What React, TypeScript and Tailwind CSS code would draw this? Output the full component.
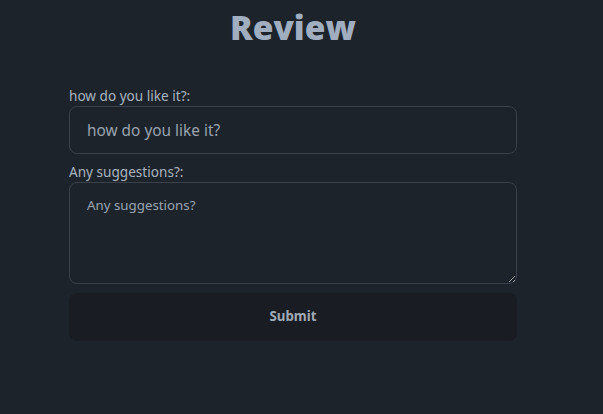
import React from "react";

export default function App() {
  return (
    <div className="min-h-[414px] w-full bg-[#1d232b]" style={{ fontFamily: '"Noto Sans", "Open Sans", sans-serif' }}>
      <div className="w-[586px] flex flex-col items-center">
        <h1 className="mt-[5px] text-[33.5px] leading-[44px] font-extrabold text-[#a0aec0]" style={{ fontFamily: '"Open Sans", "Noto Sans", sans-serif' }}>Review</h1>
        <form className="mt-[38px] w-[448px] flex flex-col" onSubmit={(e) => e.preventDefault()}>
          <label className="text-[13.6px] leading-[18px] text-[#a9b3be]">how do you like it?:</label>
          <input
            className="mt-[1px] h-[48px] w-full rounded-[8px] border border-[#3a414b] bg-[#1d232b] px-[17px] text-[15.4px] text-[#a9b3be] placeholder:text-[#9aa4af] outline-none"
            placeholder="how do you like it?"
          />
          <label className="mt-[9px] text-[13.6px] leading-[18px] text-[#a9b3be]">Any suggestions?:</label>
          <textarea
            className="mt-[1px] h-[102px] w-full rounded-[8px] border border-[#3a414b] bg-[#1d232b] px-[17px] py-[13px] text-[13.3px] text-[#a9b3be] placeholder:text-[#9aa4af] outline-none"
            placeholder="Any suggestions?"
          />
          <button type="submit" className="mt-[9px] h-[48px] w-full rounded-[8px] bg-[#191c23] text-[13.3px] font-bold text-[#a0aab6]">
            Submit
          </button>
        </form>
      </div>
    </div>
  );
}
